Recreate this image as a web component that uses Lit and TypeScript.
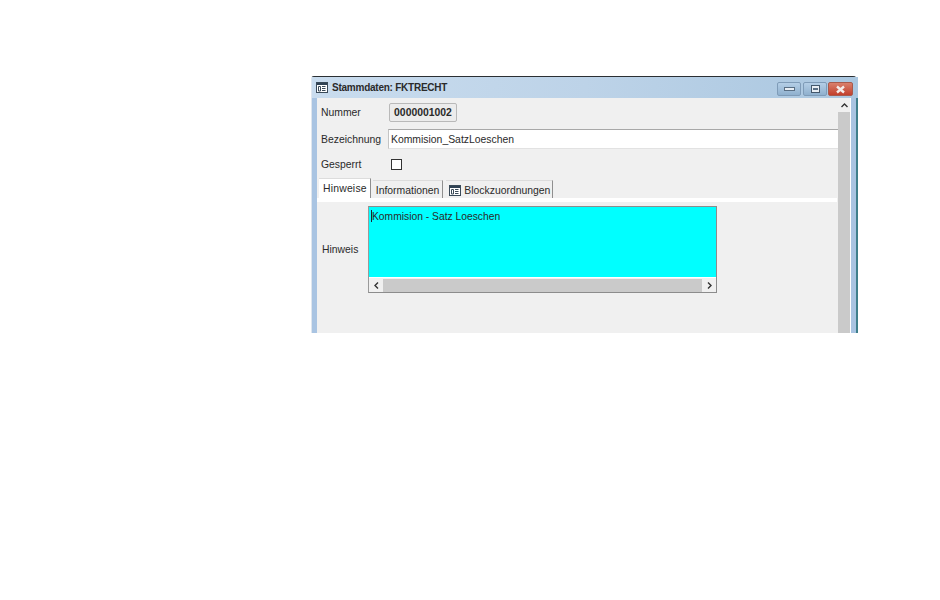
import { LitElement, html, css, svg } from 'lit';
import { customElement } from 'lit/decorators.js';

const tableIcon = svg`
  <rect x="0.5" y="0.5" width="11" height="10" fill="#fff" stroke="#3a4a58"/>
  <rect x="1" y="1" width="10" height="2" fill="#2f4254"/>
  <path d="M2.5 4.5h2v4.5h-2zM6 4.5h3.5M6 6.5h3.5M6 8.5h3.5" fill="none" stroke="#3a4a58"/>
`;

@customElement('app-root')
export class AppRoot extends LitElement {
  static override styles = css`
    :host {
      display: block;
      padding: 76px 0 0 311px;
      font-family: 'Liberation Sans', Arial, sans-serif;
      font-size: 10.4px;
      color: #2a2a2a;
    }

    svg {
      display: block;
    }

    .window {
      background: #a9c4e2;
      border-left: 1px solid #dfe6ee;
      border-top: 1px solid #2b2f33;
      border-top-left-radius: 3px;
      border-top-right-radius: 5px;
      box-sizing: border-box;
      display: flex;
      flex-direction: column;
      height: 257px;
      width: 547px;
    }

    .titlebar {
      align-items: flex-start;
      background: linear-gradient(90deg, #c9dcee 0, #bdd3e8 50%, #aac7e0 100%);
      display: flex;
      flex: none;
      height: 21px;
      padding: 0 5px 0 4px;
    }

    .title {
      align-items: center;
      display: flex;
      font-size: 10px;
      font-weight: bold;
      gap: 4px;
      height: 20px;
      letter-spacing: -0.24px;
    }

    .controls {
      display: flex;
      gap: 2px;
      margin-left: auto;
      padding-top: 5px;
    }

    .control {
      align-items: center;
      background: linear-gradient(#b4cee6, #8fb0ce);
      border: 1px solid #7f9cb8;
      border-radius: 2px;
      box-sizing: border-box;
      display: flex;
      height: 14px;
      justify-content: center;
      width: 24px;
    }

    .control--close {
      background: linear-gradient(#d9806c, #c23f2c);
      border-color: #a85a4c;
      margin-left: -1px;
      width: 25px;
    }

    .frame {
      display: flex;
      flex: 1;
      min-height: 0;
      padding-left: 5px;
    }

    .content {
      background: #f0f0f0;
      display: flex;
      flex: 1;
      flex-direction: column;
      min-width: 0;
    }

    .row {
      align-items: center;
      display: flex;
      padding-left: 4px;
    }

    .row--number {
      height: 19px;
      margin-top: 5px;
    }

    .row--name {
      height: 20px;
      margin-top: 7px;
    }

    .row--locked {
      height: 12px;
      margin-top: 9px;
    }

    .label {
      flex: none;
      width: 67px;
    }

    .row--number .label {
      padding-bottom: 1px;
    }

    .number {
      align-items: center;
      background: #ececec;
      border: 1px solid #b9b9b9;
      border-radius: 2px;
      box-sizing: border-box;
      display: flex;
      font-weight: bold;
      height: 19px;
      justify-content: center;
      margin-left: 1px;
      padding-bottom: 1px;
      width: 68px;
    }

    .input {
      align-items: center;
      background: #fff;
      border-bottom: 1px solid #e2e2e2;
      border-left: 1px solid #c4c4c4;
      border-top: 1px solid #a8a8a8;
      box-sizing: border-box;
      display: flex;
      flex: 1;
      height: 20px;
      padding-left: 2px;
    }

    .checkbox {
      background: #fff;
      border: 1px solid #333;
      box-sizing: border-box;
      height: 11px;
      margin: 1px 0 0 3px;
      width: 11px;
    }

    .tabs {
      align-items: flex-end;
      display: flex;
      flex: none;
      gap: 3px;
      height: 20px;
      margin-top: 8px;
      padding-left: 2px;
    }

    .tab {
      align-items: center;
      background: #f0f0f0;
      border-right: 1px solid #8f8f8f;
      border-top: 1px solid #dcdcdc;
      box-sizing: border-box;
      display: flex;
      gap: 3px;
      height: 18px;
      padding: 2px 3px 0 3px;
    }

    .tab:last-child {
      padding-right: 2px;
    }

    .tab--active {
      background: #fff;
      height: 20px;
      letter-spacing: 0.2px;
      margin-right: -1px;
      padding: 0 3px 0 4px;
    }

    .tab-strip {
      background: #fff;
      flex: none;
      height: 4px;
      margin-right: 1px;
    }

    .panel {
      display: flex;
      flex: 1;
      padding-top: 4px;
    }

    .panel-label {
      align-self: flex-start;
      flex: none;
      line-height: 12px;
      margin-top: 38px;
      padding-left: 5px;
      width: 46px;
    }

    .textarea {
      border: 1px solid #8c8c8c;
      border-left-color: #9a9a9a;
      box-sizing: border-box;
      display: flex;
      flex-direction: column;
      height: 87px;
      width: 349px;
    }

    .text {
      background: #00ffff;
      box-sizing: border-box;
      flex: 1;
      font-size: 10.3px;
      padding: 4px 0 0 3px;
      position: relative;
    }

    .caret {
      background: #223;
      height: 12px;
      left: 2px;
      position: absolute;
      top: 3px;
      width: 1px;
    }

    .hscroll {
      align-items: center;
      background: #f0f0f0;
      border-top: 1px solid #fff;
      display: flex;
      flex: none;
      height: 14px;
    }

    .hscroll-arrow {
      flex: none;
      width: 14px;
    }

    .hscroll-arrow svg {
      margin: 0 auto;
    }

    .hscroll-thumb {
      background: #cacaca;
      flex: 1;
      height: 13px;
    }

    .vscroll {
      background: #f0f0f0;
      display: flex;
      flex: none;
      flex-direction: column;
      width: 12px;
    }

    .vscroll-arrow {
      box-sizing: border-box;
      flex: none;
      height: 14px;
      padding-top: 5px;
    }

    .vscroll-arrow svg {
      margin: 0 auto;
    }

    .vscroll-thumb {
      background: #cacaca;
      flex: 1;
    }

    .edge {
      background: #fff;
      flex: none;
      width: 1px;
    }

    .side {
      background: #a9c4e2;
      border-right: 2px solid #3f7f8c;
      flex: none;
      width: 5px;
    }
  `;

  override render() {
    return html`
      <div class="window">
        <div class="titlebar">
          <div class="title">
            <svg width="12" height="11" viewBox="0 0 12 11">${tableIcon}</svg>
            Stammdaten: FKTRECHT
          </div>
          <div class="controls">
            <div class="control">
              <svg width="11" height="4" viewBox="0 0 11 4"><rect x="0.5" y="0.5" width="10" height="3" fill="#e8eef4" stroke="#5a6f84"/></svg>
            </div>
            <div class="control">
              <svg width="9" height="8" viewBox="0 0 9 8"><rect x="0.5" y="0.5" width="8" height="7" fill="#e8eef4" stroke="#44586c"/><rect x="2" y="3" width="5" height="2" fill="#5a6f84"/></svg>
            </div>
            <div class="control control--close">
              <svg width="11" height="9" viewBox="0 0 11 9"><path d="M2 1.5l7 6M9 1.5l-7 6" stroke="#f4ecea" stroke-width="2.4"/></svg>
            </div>
          </div>
        </div>
        <div class="frame">
          <div class="content">
            <div class="row row--number">
              <div class="label">Nummer</div>
              <div class="number">0000001002</div>
            </div>
            <div class="row row--name">
              <div class="label">Bezeichnung</div>
              <div class="input">Kommision_SatzLoeschen</div>
            </div>
            <div class="row row--locked">
              <div class="label">Gesperrt</div>
              <div class="checkbox"></div>
            </div>
            <div class="tabs">
              <div class="tab tab--active">Hinweise</div>
              <div class="tab">Informationen</div>
              <div class="tab">
                <svg width="12" height="11" viewBox="0 0 12 11">${tableIcon}</svg>
                Blockzuordnungen
              </div>
            </div>
            <div class="tab-strip"></div>
            <div class="panel">
              <div class="panel-label">Hinweis</div>
              <div class="textarea">
                <div class="text"><span class="caret"></span>Kommision - Satz Loeschen</div>
                <div class="hscroll">
                  <div class="hscroll-arrow">
                    <svg width="5" height="7" viewBox="0 0 5 7"><path d="M4 0.5l-3 3 3 3" fill="none" stroke="#333" stroke-width="1.4"/></svg>
                  </div>
                  <div class="hscroll-thumb"></div>
                  <div class="hscroll-arrow">
                    <svg width="5" height="7" viewBox="0 0 5 7"><path d="M1 0.5l3 3-3 3" fill="none" stroke="#333" stroke-width="1.4"/></svg>
                  </div>
                </div>
              </div>
            </div>
          </div>
          <div class="vscroll">
            <div class="vscroll-arrow">
              <svg width="7" height="5" viewBox="0 0 7 5"><path d="M0.5 4l3-3 3 3" fill="none" stroke="#333" stroke-width="1.4"/></svg>
            </div>
            <div class="vscroll-thumb"></div>
          </div>
          <div class="edge"></div>
          <div class="side"></div>
        </div>
      </div>
    `;
  }
}

declare global {
  interface HTMLElementTagNameMap {
    'app-root': AppRoot;
  }
}
